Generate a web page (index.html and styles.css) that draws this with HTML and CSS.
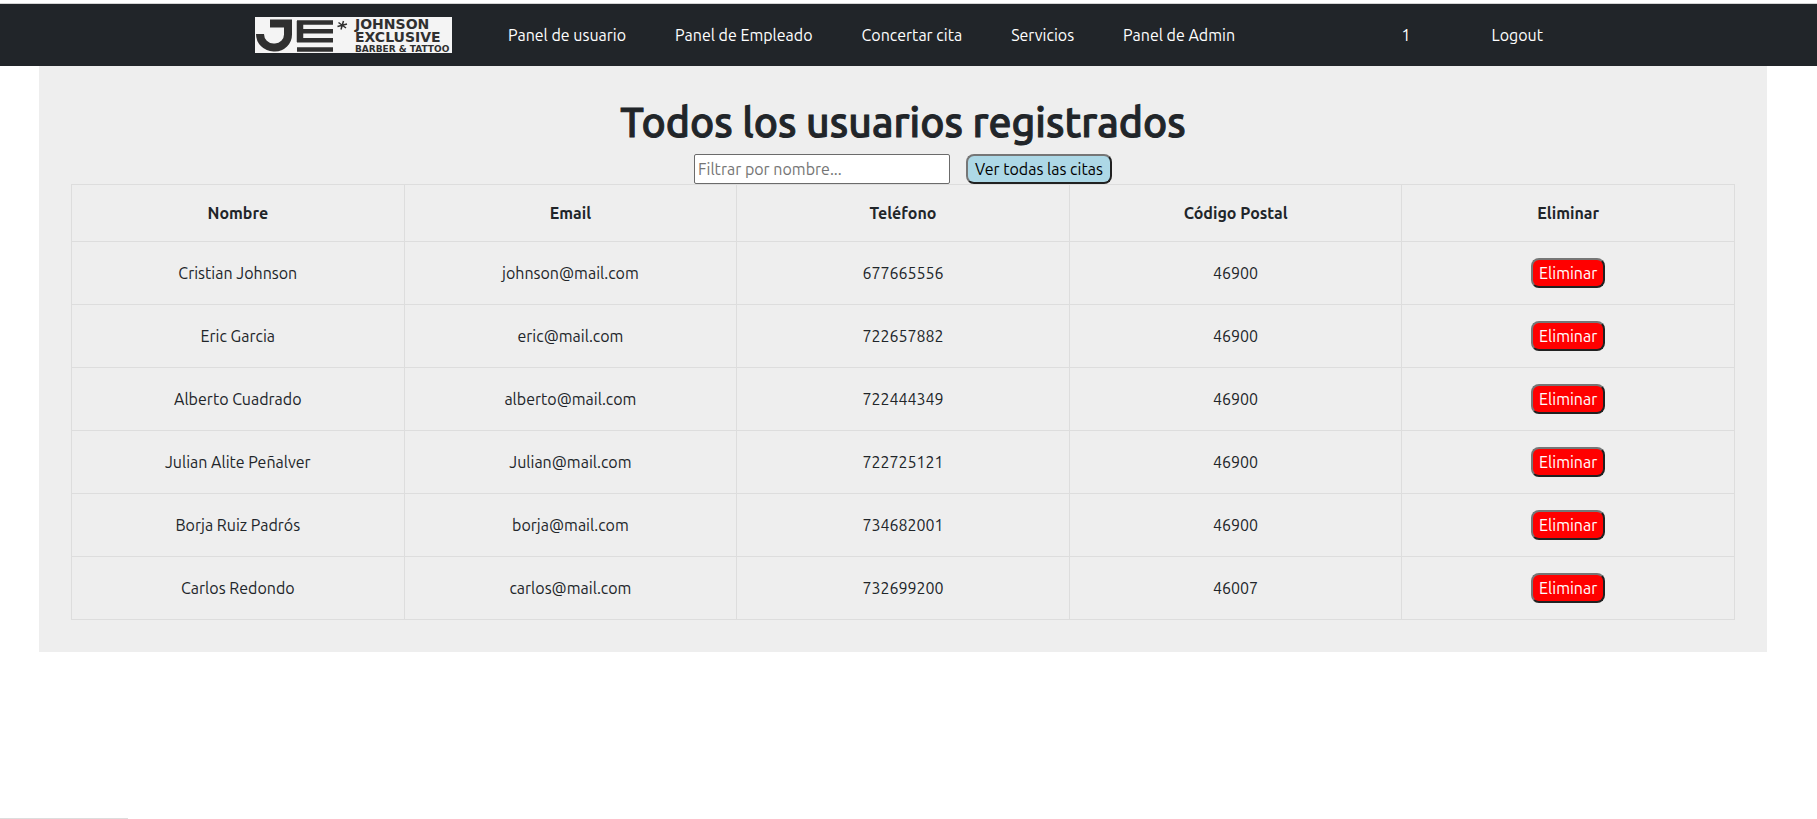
FILE: index.html
```html
<!DOCTYPE html>
<html lang="es">
<head>
<meta charset="utf-8">
<meta name="viewport" content="width=device-width, initial-scale=1">
<title>Todos los usuarios registrados</title>
<link rel="stylesheet" href="styles.css">
</head>
<body>
<header class="navbar">
  <nav class="navbar-inner" aria-label="Principal">
    <a class="brand" href="#">
      <svg class="logo" viewBox="0 0 197 36" role="img" aria-label="Johnson Exclusive Barber &amp; Tattoo">
        <rect width="197" height="36" fill="#f4f4f4"/>
        <g fill="none" stroke="#303030">
          <path d="M15 6.500H33V17.500A13 13 0 0 1 20 30.500H18.500A13.500 13.500 0 0 1 5 17" stroke-width="8"/>
          <path d="M42 5.500H78M42 14.300H78M42 23.300H78M42 32.500H78" stroke-width="4.600"/>
          <path d="M45 4V25" stroke-width="6.500"/>
          <path d="M88.500 4L86 12.500M83.500 5.500L91 11M82.500 9.500L92 7" stroke-width="1.500"/>
        </g>
        <g class="logo-words" fill="#303030">
          <text class="logo-name" x="100" y="12">JOHNSON</text>
          <text class="logo-name" x="100" y="25">EXCLUSIVE</text>
          <text class="logo-tag" x="100" y="35">BARBER &amp; TATTOO</text>
        </g>
      </svg>
    </a>
    <ul class="nav-list">
      <li><a href="#">Panel de usuario</a></li>
      <li><a href="#">Panel de Empleado</a></li>
      <li><a href="#">Concertar cita</a></li>
      <li><a href="#">Servicios</a></li>
      <li><a href="#">Panel de Admin</a></li>
    </ul>
    <ul class="nav-list nav-session">
      <li><a href="#">1</a></li>
      <li><a href="#">Logout</a></li>
    </ul>
  </nav>
</header>
<main class="panel">
  <h1>Todos los usuarios registrados</h1>
  <div class="toolbar">
    <input class="filter" type="text" placeholder="Filtrar por nombre..." aria-label="Filtrar por nombre">
    <button class="btn btn-info" type="button">Ver todas las citas</button>
  </div>
  <table class="users">
    <thead>
      <tr><th scope="col">Nombre</th><th scope="col">Email</th><th scope="col">Teléfono</th><th scope="col">Código Postal</th><th scope="col">Eliminar</th></tr>
    </thead>
    <tbody>
      <tr><td>Cristian Johnson</td><td>johnson@mail.com</td><td>677665556</td><td>46900</td><td><button class="btn btn-danger" type="button">Eliminar</button></td></tr>
      <tr><td>Eric Garcia</td><td>eric@mail.com</td><td>722657882</td><td>46900</td><td><button class="btn btn-danger" type="button">Eliminar</button></td></tr>
      <tr><td>Alberto Cuadrado</td><td>alberto@mail.com</td><td>722444349</td><td>46900</td><td><button class="btn btn-danger" type="button">Eliminar</button></td></tr>
      <tr><td>Julian Alite Peñalver</td><td>Julian@mail.com</td><td>722725121</td><td>46900</td><td><button class="btn btn-danger" type="button">Eliminar</button></td></tr>
      <tr><td>Borja Ruiz Padrós</td><td>borja@mail.com</td><td>734682001</td><td>46900</td><td><button class="btn btn-danger" type="button">Eliminar</button></td></tr>
      <tr><td>Carlos Redondo</td><td>carlos@mail.com</td><td>732699200</td><td>46007</td><td><button class="btn btn-danger" type="button">Eliminar</button></td></tr>
    </tbody>
  </table>
</main>
<div class="status-edge"></div>
</body>
</html>
```
FILE: styles.css
```css
* { box-sizing: border-box; }

body {
  margin: 0;
  padding-top: 3px;
  background: #fff;
  color: #212529;
  font-family: Ubuntu, "Noto Sans", sans-serif;
  font-size: 16px;
  line-height: 24px;
}

.navbar {
  padding: 12px 11px 12px 0;
  border-top: 1px solid #d4d4d4;
  background: #212529;
}

.navbar-inner {
  display: flex;
  align-items: center;
  max-width: 1320px;
  margin: 0 auto;
  padding: 0 12px;
}

.brand { display: block; margin-right: 48px; }
.logo { display: block; width: 197px; height: 36px; }
.logo-words { font-family: "DejaVu Sans", sans-serif; font-weight: 700; }
.logo-name { font-size: 14px; }
.logo-tag { font-size: 9px; }

.nav-list {
  display: flex;
  gap: 33px;
  margin: 0;
  padding: 0;
  list-style: none;
}

.nav-list a {
  display: block;
  padding: 7px 8px;
  color: #fff;
  text-decoration: none;
  white-space: nowrap;
}

.nav-session { gap: 65px; margin-left: auto; }

.panel {
  margin: 0 50px 0 39px;
  padding: 32px;
  background: #eee;
}

h1 {
  margin: 0 0 8px;
  font-size: 41px;
  font-weight: 500;
  line-height: 48px;
  text-align: center;
  -webkit-text-stroke: 1px currentColor;
}

.toolbar {
  display: flex;
  justify-content: center;
  gap: 16px;
}

.filter {
  width: 256px;
  height: 30px;
  padding: 1px 3px;
  border: 1px solid #6b6b6b;
  border-radius: 2px;
  background: #fff;
  font: inherit;
}

.filter::placeholder { color: #757575; opacity: 1; }

.btn {
  height: 30px;
  padding: 0 6px;
  border: 2px solid;
  border-color: #767676 #212121 #212121 #767676;
  border-radius: 8px;
  font: inherit;
  white-space: nowrap;
}

.btn-info { padding: 0 7px; background: #add8e6; color: #000; }
.btn-danger { background: #f00; color: #fff; }

.users {
  width: 100%;
  border-collapse: collapse;
  table-layout: fixed;
  text-align: center;
}

.users th,
.users td {
  padding: 16px;
  border: 1px solid #ddd;
  vertical-align: middle;
}

.users .btn { display: block; margin: 0 auto; }

.status-edge {
  position: fixed;
  bottom: 0;
  left: 0;
  width: 128px;
  height: 1px;
  background: #ddd;
}
```
